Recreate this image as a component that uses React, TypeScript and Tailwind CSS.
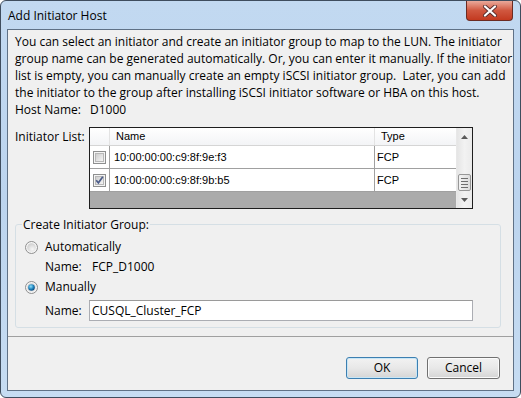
import React from "react";

const ui = "font-['Open_Sans',sans-serif] text-[12px]";

const CheckBox = ({ checked }: { checked?: boolean }) => (
  <svg width="13" height="13" viewBox="0 0 13 13">
    <defs>
      <linearGradient id="cbFill" x1="0" y1="0" x2="1" y2="1">
        <stop offset="0" stopColor="#cbcbcb" />
        <stop offset="1" stopColor="#f7f7f7" />
      </linearGradient>
    </defs>
    <rect x="0.5" y="0.5" width="12" height="12" fill="#f4f4f4" stroke="#8e8f8f" />
    <rect x="2.5" y="2.5" width="8" height="8" fill="url(#cbFill)" stroke="#b8b8b8" />
    {checked && (
      <path d="M3.2 6.2 L5.4 8.8 L9.8 2.8" fill="none" stroke="#4c5d8a" strokeWidth="1.7" />
    )}
  </svg>
);

const Radio = ({ checked }: { checked?: boolean }) => (
  <svg width="13" height="13" viewBox="0 0 13 13">
    <defs>
      <radialGradient id="rbOff" cx="0.6" cy="0.7" r="0.7">
        <stop offset="0" stopColor="#f6f6f6" />
        <stop offset="1" stopColor="#cfcfcf" />
      </radialGradient>
      <radialGradient id="rbDot" cx="0.4" cy="0.35" r="0.7">
        <stop offset="0" stopColor="#8fe0fb" />
        <stop offset="0.6" stopColor="#1b7fb9" />
        <stop offset="1" stopColor="#0c3f70" />
      </radialGradient>
    </defs>
    <circle cx="6.5" cy="6.5" r="6" fill="#f4f4f4" stroke="#8f8f8f" />
    <circle cx="6.5" cy="6.5" r="4.3" fill="url(#rbOff)" />
    {checked && <circle cx="6.5" cy="6.5" r="3.3" fill="url(#rbDot)" />}
  </svg>
);

const rows = [
  { id: "10:00:00:00:c9:8f:9e:f3", type: "FCP", checked: false },
  { id: "10:00:00:00:c9:8f:9b:b5", type: "FCP", checked: true },
];

const App = () => {
  return (
    <div className="w-[521px] h-[398px] relative flex flex-col px-[6px] pb-[6px] border border-[#3f4d5e] rounded-[6px] bg-gradient-to-b from-[#c2d9f1] via-[#bcd4ee] to-[#c6dcf2] overflow-hidden">
      <div className={`h-[28px] flex items-center pl-[1px] pt-[1px] text-black ${ui}`}>
        Add Initiator Host
      </div>
      <div className="absolute top-0 right-[7px] w-[47px] h-[20px] rounded-b-[4px] border border-t-0 border-[#6b2b22] bg-gradient-to-b from-[#e9a99b] via-[#d0573f] to-[#c3391f] flex items-center justify-center">
        <svg width="16" height="12" viewBox="0 0 16 12">
          <path d="M3 1.5 L13 10.5 M13 1.5 L3 10.5" stroke="#5a3030" strokeWidth="4" strokeLinecap="round" />
          <path d="M3 1.5 L13 10.5 M13 1.5 L3 10.5" stroke="#ffffff" strokeWidth="2.2" strokeLinecap="round" />
        </svg>
      </div>

      <div className={`flex-1 flex flex-col bg-[#f0f0f0] border border-[#5f7186] text-black ${ui}`}>
        <p className="pt-[3px] pl-[7px] leading-[17px] whitespace-nowrap">
          You can select an initiator and create an initiator group to map to the LUN. The initiator
          <br />
          group name can be generated automatically. Or, you can enter it manually. If the initiator
          <br />
          list is empty, you can manually create an empty iSCSI initiator group.&nbsp; Later, you can add
          <br />
          the initiator to the group after installing iSCSI initiator software or HBA on this host.
        </p>

        <div className="flex pl-[7px] leading-[17px]">
          <span className="w-[75px]">Host Name:</span>
          <span>D1000</span>
        </div>

        <div className="flex pl-[7px] mt-[9px]">
          <span className="w-[74px] leading-[17px] pt-[1px]">Initiator List:</span>
          <div className="w-[384px] h-[82px] border border-[#1e1e1e] bg-[#ababab] flex font-['Liberation_Sans',Arial,sans-serif] text-[11px]">
            <div className="flex-1 flex flex-col">
              <div className="h-[18px] flex bg-gradient-to-b from-white to-[#f3f4f6] border-b border-[#d5d5d5]">
                <div className="w-[20px] border-r border-[#e3e3e3]" />
                <div className="w-[265px] pl-[6px] flex items-center border-r border-[#e3e3e3]">Name</div>
                <div className="flex-1 pl-[6px] flex items-center">Type</div>
              </div>
              {rows.map((r) => (
                <div key={r.id} className="h-[23px] flex bg-white border-b border-[#a0a0a0]">
                  <div className="w-[20px] border-r border-[#a0a0a0] flex items-center justify-center pt-[1px]">
                    <CheckBox checked={r.checked} />
                  </div>
                  <div className="w-[265px] pl-[4px] flex items-center border-r border-[#a0a0a0]">{r.id}</div>
                  <div className="flex-1 pl-[2px] flex items-center">{r.type}</div>
                </div>
              ))}
            </div>
            <div className="w-[16px] flex flex-col bg-gradient-to-r from-[#e5e5e5] via-[#f2f2f2] to-[#ebebeb] border-l border-[#e8e8e8]">
              <div className="h-[17px] flex items-center justify-center">
                <svg width="7" height="4" viewBox="0 0 7 4">
                  <path d="M0 4 L3.5 0 L7 4 Z" fill="#5a5a5a" />
                </svg>
              </div>
              <div className="h-[29px]" />
              <div className="h-[17px] mx-[1px] rounded-[2px] border border-[#979797] bg-gradient-to-r from-[#f3f3f3] to-[#dcdcdc] flex flex-col items-center justify-center gap-[2px]">
                <div className="w-[7px] h-[1px] bg-[#6e6e6e]" />
                <div className="w-[7px] h-[1px] bg-[#6e6e6e]" />
                <div className="w-[7px] h-[1px] bg-[#6e6e6e]" />
                <div className="w-[7px] h-[1px] bg-[#6e6e6e]" />
              </div>
              <div className="flex-1 flex items-center justify-center">
                <svg width="7" height="4" viewBox="0 0 7 4">
                  <path d="M0 0 L3.5 4 L7 0 Z" fill="#5a5a5a" />
                </svg>
              </div>
            </div>
          </div>
        </div>

        <div className="relative ml-[7px] mt-[15px] w-[486px] h-[104px] border border-[#d5dfe5] rounded-[3px] pt-[12px] pl-[9px]">
          <span className="absolute -top-[9px] left-[6px] px-[1px] bg-[#f0f0f0] leading-[17px]">
            Create Initiator Group:
          </span>
          <div className="h-[20px] flex items-center gap-[7px]">
            <Radio />
            <span>Automatically</span>
          </div>
          <div className="h-[20px] flex items-center pl-[20px]">
            <span className="w-[47px]">Name:</span>
            <span>FCP_D1000</span>
          </div>
          <div className="h-[20px] flex items-center gap-[7px]">
            <Radio checked />
            <span>Manually</span>
          </div>
          <div className="mt-[3px] flex items-center pl-[20px]">
            <span className="w-[44px]">Name:</span>
            <div className="w-[384px] h-[21px] border border-[#abadb3] border-t-[#9a9a9a] bg-white pl-[2px] flex items-center">
              CUSQL_Cluster_FCP
            </div>
          </div>
        </div>

        <div className="mt-[8px] border-t border-[#a0a0a0] flex-1 flex justify-end items-start gap-[9px] pt-[20px] pr-[13px]">
          <button className="w-[72px] h-[22px] rounded-[3px] border border-[#3c7fb1] bg-gradient-to-b from-[#f2f2f2] via-[#e8e8e8] to-[#d5d5d5] shadow-[inset_0_0_0_1px_#c8e6f6]">
            OK
          </button>
          <button className="w-[73px] h-[22px] rounded-[3px] border border-[#707070] bg-gradient-to-b from-[#f2f2f2] via-[#e8e8e8] to-[#d5d5d5] shadow-[inset_0_0_0_1px_#fbfbfb]">
            Cancel
          </button>
        </div>
      </div>
    </div>
  );
};

export default App;
